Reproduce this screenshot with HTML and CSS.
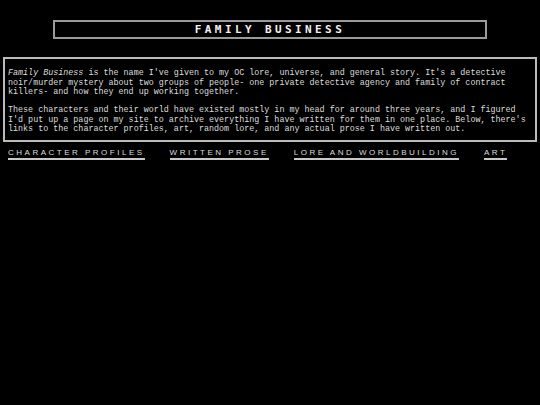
FILE: index.html
```html
<!DOCTYPE html>
<html>
<head>
<meta charset="utf-8">
<title>Family Business</title>
<link rel="stylesheet" href="styles.css">
</head>
<body>
<header class="title-bar">
  <h1 class="title">Family Business</h1>
</header>
<section class="intro">
  <p><em>Family Business</em> is the name I've given to my OC lore, universe, and general story. It's a detective noir/murder mystery about two groups of people- one private detective agency and family of contract killers- and how they end up working together.</p>
  <p>These characters and their world have existed mostly in my head for around three years, and I figured I'd put up a page on my site to archive everything I have written for them in one place. Below, there's links to the character profiles, art, random lore, and any actual prose I have written out.</p>
</section>
<nav class="links">
  <a href="#">Character Profiles</a>
  <a href="#">Written Prose</a>
  <a href="#">Lore and Worldbuilding</a>
  <a href="#">Art</a>
</nav>
</body>
</html>
```

FILE: styles.css
```css
html, body {
  background: #000;
}

body {
  margin: 0;
  padding: 20px 3px 0 3px;
  color: #ddd;
  font-family: "Liberation Mono", "Courier New", monospace;
}

.title-bar {
  margin: 0 50px 0 50px;
  border: 2px solid #9a9a9a;
  height: 15px;
  display: flex;
  align-items: center;
  justify-content: center;
}

.title {
  margin: 0;
  font-family: "DejaVu Sans Mono", monospace;
  font-weight: bold;
  font-size: 11px;
  letter-spacing: 3.4px;
  text-transform: uppercase;
  color: #f2f2f2;
  line-height: 1;
}

.intro {
  margin-top: 18px;
  border: 2px solid #bbb;
  padding: 10px 0 5px 3px;
  font-size: 8.4px;
  line-height: 9.5px;
}

.intro p {
  margin: 0 0 8.5px 0;
}

.intro p:last-child {
  margin-bottom: 0;
}

.links {
  display: flex;
  gap: 25px;
  padding: 6px 5px 0 5px;
}

.links a {
  flex-shrink: 0;
  white-space: nowrap;
  color: #dedede;
  font-family: "Liberation Sans", Arial, sans-serif;
  font-size: 8px;
  line-height: 9px;
  letter-spacing: 2.5px;
  text-transform: uppercase;
  text-decoration: none;
  border-bottom: 2px solid #c8c8c8;
  padding-bottom: 1px;
}
```
